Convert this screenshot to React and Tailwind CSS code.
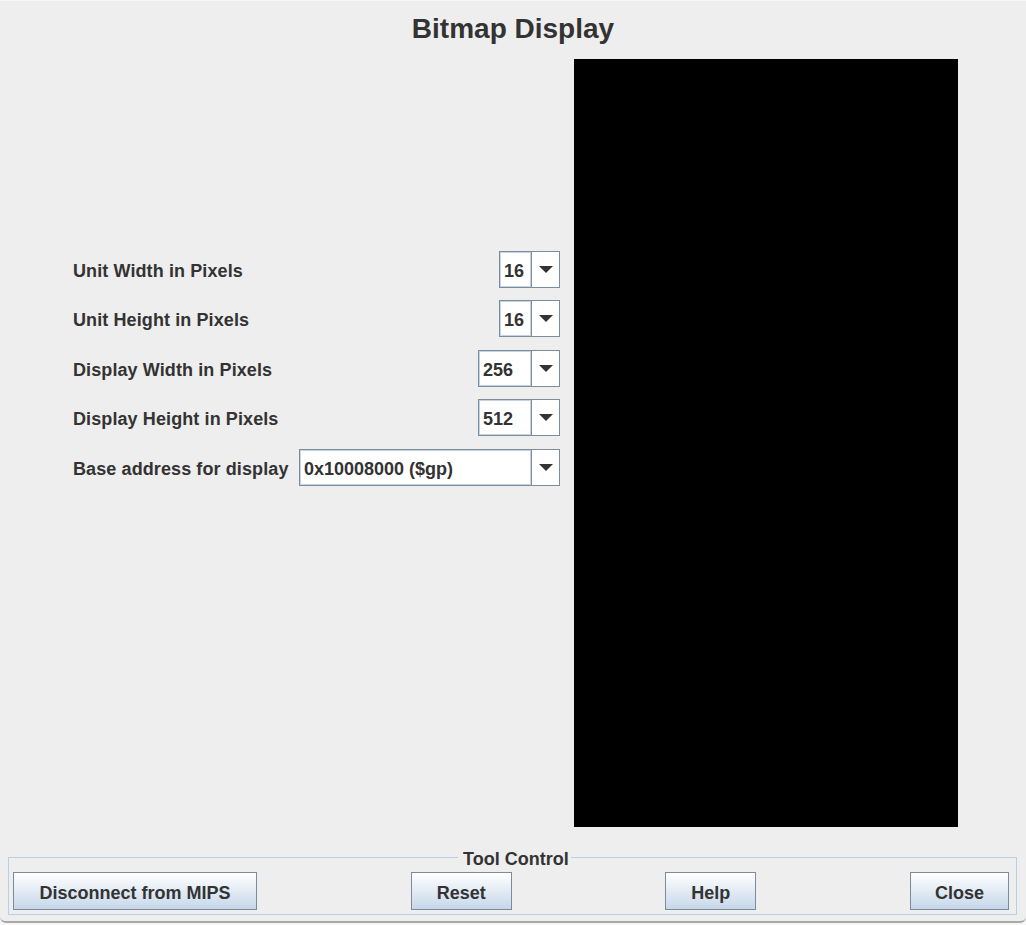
function Arrow() {
  return (
    <svg width="14" height="7" viewBox="0 0 14 7">
      <polygon points="0,0 14,0 7,7" fill="#333333" />
    </svg>
  );
}

function Combo({ value, textWidth }) {
  return (
    <div className="flex h-[37px] border border-[#7d8c9b] bg-white">
      <div
        className={`${textWidth} flex items-center border border-[#c3d4e7] pl-[3px] pt-[2px] text-[18px] font-bold leading-none text-[#333333]`}
      >
        {value}
      </div>
      <div className="flex w-[28px] items-center justify-center border-l border-[#7d8c9b] bg-white">
        <Arrow />
      </div>
    </div>
  );
}

function Row({ label, value, textWidth, className }) {
  return (
    <div className={`flex h-[37px] items-center justify-between ${className || ""}`}>
      <div className="pt-[2px] text-[18px] font-bold leading-none tracking-[0.1px] text-[#333333]">{label}</div>
      <Combo value={value} textWidth={textWidth} />
    </div>
  );
}

function Btn({ children, w }) {
  return (
    <button
      className={`${w} h-[38px] border border-[#7b8b9b] bg-gradient-to-b from-white to-[#c6d7e9] pt-[3px] text-[18px] font-bold leading-none text-[#333333]`}
    >
      {children}
    </button>
  );
}

export default function App() {
  const rows = [
    { label: "Unit Width in Pixels", value: "16", w: "w-[31px]" },
    { label: "Unit Height in Pixels", value: "16", w: "w-[31px]", cls: "mt-[12px]" },
    { label: "Display Width in Pixels", value: "256", w: "w-[52px]", cls: "mt-[13px]" },
    { label: "Display Height in Pixels", value: "512", w: "w-[52px]", cls: "mt-[12px]" },
    { label: "Base address for display", value: "0x10008000 ($gp)", w: "w-[231px]", cls: "mt-[13px]" }
  ];

  return (
    <div className="h-[925px] w-[1026px] bg-[#f6f6f6] font-['Liberation_Sans',Arial,sans-serif]">
      <div className="h-[923px] rounded-b-[6px] border-t border-b-2 border-t-[#f6f6f6] border-b-[#a8a8a8] bg-[#eeeeee]">
        {/* title */}
        <div className="h-[58px] pt-[14px] text-center text-[28px] font-bold leading-[28px] text-[#333333]">
          Bitmap Display
        </div>

        {/* settings + bitmap */}
        <div className="flex">
          <div className="w-[574px] pl-[73px] pr-[14px] pt-[192px]">
            {rows.map((r, i) => (
              <Row key={i} label={r.label} value={r.value} textWidth={r.w} className={r.cls} />
            ))}
          </div>
          <div className="h-[768px] w-[384px] bg-black" />
        </div>

        {/* tool control */}
        <div className="relative ml-[8px] mt-[30px] w-[1009px] border border-[#b8cfe5] pb-[4px] pl-[4px] pr-[7px] pt-[14px]">
          <div className="absolute -top-[8px] left-[449px] bg-[#eeeeee] pl-[5px] pr-[2px] text-[18px] font-bold leading-[18px] text-[#333333]">
            Tool Control
          </div>
          <div className="flex items-center justify-between">
            <Btn w="w-[244px]">Disconnect from MIPS</Btn>
            <Btn w="w-[101px]">Reset</Btn>
            <Btn w="w-[91px]">Help</Btn>
            <Btn w="w-[99px]">Close</Btn>
          </div>
        </div>
      </div>
    </div>
  );
}
